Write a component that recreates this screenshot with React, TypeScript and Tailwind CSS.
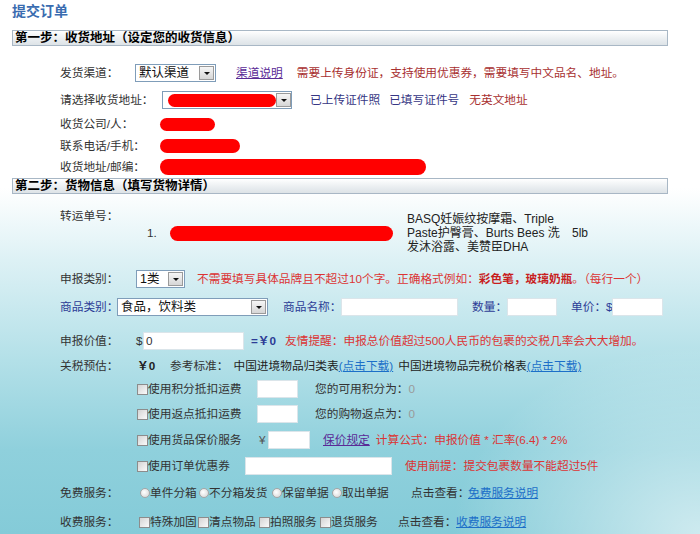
import React from 'react';

const FONT = "font-['Liberation_Sans','Noto_Sans_CJK_SC',sans-serif]";

function Arrow() {
  return (
    <span className="ml-auto mr-[1px] flex h-[14px] w-[15px] shrink-0 items-center justify-center border border-[#9a9a9a] bg-[linear-gradient(180deg,#f6f6f6,#d6d6d6)]">
      <span className="h-0 w-0 border-x-[3px] border-t-[3px] border-x-transparent border-t-[#111]" />
    </span>
  );
}

function Select({ className, children }: { className: string; children?: React.ReactNode }) {
  return (
    <div className={`flex h-[18px] shrink-0 items-center border border-[#7f9db9] bg-white text-[12.5px] text-[#111] ${className}`}>
      <span className="flex flex-1 items-center pl-[3px]">{children}</span>
      <Arrow />
    </div>
  );
}

function Input({ className, children }: { className: string; children?: React.ReactNode }) {
  return (
    <span className={`flex h-[18px] shrink-0 items-center border border-[#dbe5ea] bg-white pl-[2px] text-[#333] ${className}`}>
      {children}
    </span>
  );
}

function Check() {
  return (
    <span className="inline-block h-[11px] w-[11px] shrink-0 border border-[#8c8c8c] bg-[linear-gradient(135deg,#d4d4d4,#fafafa)]" />
  );
}

function Radio() {
  return (
    <span className="inline-block h-[10px] w-[10px] shrink-0 rounded-full border border-[#a6a6a6] bg-[radial-gradient(circle_at_40%_40%,#ffffff,#d2d2d2)]" />
  );
}

function Blob({ className }: { className: string }) {
  return <span className={`block shrink-0 rounded-full bg-[#ff0000] ${className}`} />;
}

function SectionBar({ children }: { children: React.ReactNode }) {
  return (
    <div className="ml-[12px] flex h-[16px] w-[656px] items-center border border-[#a8b7c5] bg-[linear-gradient(180deg,#ffffff,#e9edf0_60%,#dde3e7)] pl-[2px] text-[12.5px] font-bold leading-none text-black">
      {children}
    </div>
  );
}

export default function App() {
  return (
    <div
      className={`${FONT} h-[534px] w-[700px] overflow-hidden whitespace-nowrap bg-[radial-gradient(ellipse_at_100%_100%,rgba(255,255,255,0.6),rgba(255,255,255,0)_25%),linear-gradient(180deg,#ffffff_0px,#ffffff_188px,#ddf1f5_260px,#b3e0e8_360px,#8fd0dc_450px,#84cbd8_534px)] text-[11.7px] leading-[16px] text-[#333]`}
    >
      <div className="pl-[12px] pt-[3px] text-[14px] font-bold leading-[16px] text-[#3a6cb0]">提交订单</div>

      <div className="mt-[11px]">
        <SectionBar>第一步：收货地址（设定您的收货信息）</SectionBar>
      </div>

      {/* step 1 */}
      <div className="mt-[17px] flex h-[20px] items-center pl-[60px]">
        <span className="w-[75px]">发货渠道：</span>
        <Select className="w-[81px]">默认渠道</Select>
        <a className="ml-[20px] text-[#5a2a96] underline">渠道说明</a>
        <span className="ml-[14px] text-[#a83030]">需要上传身份证，支持使用优惠券，需要填写中文品名、地址。</span>
      </div>

      <div className="mt-[7px] flex h-[20px] items-center pl-[60px]">
        <span className="w-[102px]">请选择收货地址：</span>
        <Select className="w-[130px]">
          <Blob className="ml-[2px] h-[13px] w-[108px]" />
        </Select>
        <span className="ml-[18px] text-[#363684]">已上传证件照</span>
        <span className="ml-[9px] text-[#363684]">已填写证件号</span>
        <span className="ml-[10px] text-[#a83030]">无英文地址</span>
      </div>

      <div className="mt-[4px] flex h-[20px] items-center pl-[60px]">
        <span className="w-[100px]">收货公司/人：</span>
        <Blob className="h-[13px] w-[55px]" />
      </div>

      <div className="mt-[2px] flex h-[20px] items-center pl-[60px]">
        <span className="w-[100px]">联系电话/手机：</span>
        <Blob className="h-[14px] w-[80px]" />
      </div>

      <div className="mt-[1px] flex h-[20px] items-center pl-[60px]">
        <span className="w-[100px]">收货地址/邮编：</span>
        <Blob className="h-[16px] w-[266px]" />
      </div>

      <div className="mt-[1px]">
        <SectionBar>第二步：货物信息（填写货物详情）</SectionBar>
      </div>

      {/* step 2 */}
      <div className="flex h-[72px] items-start pl-[60px]">
        <span className="mt-[15px] w-[87px] leading-[14px]">转运单号：</span>
        <div className="mt-[18px] flex items-center">
          <span className="w-[23px]">1.</span>
          <Blob className="h-[15px] w-[223px]" />
          <span className="ml-[14px] w-[165px] text-[12px] leading-[14px] text-[#222]">
            BASQ妊娠纹按摩霜、Triple
            <br />
            Paste护臀膏、Burts Bees 洗
            <br />
            发沐浴露、美赞臣DHA
          </span>
          <span className="text-[12px] text-[#222]">5lb</span>
        </div>
      </div>

      <div className="mt-[3px] flex h-[20px] items-center pl-[60px]">
        <span className="w-[76px]">申报类别：</span>
        <Select className="w-[49px]">1类</Select>
        <span className="ml-[12px] text-[#dc3434]">
          不需要填写具体品牌且不超过10个字。正确格式例如：<b className="text-[#c81e1e]">彩色笔，玻璃奶瓶</b>。（每行一个）
        </span>
      </div>

      <div className="mt-[8px] flex h-[20px] items-center pl-[60px] text-[#2c3c96]">
        <span className="w-[57px]">商品类别：</span>
        <Select className="w-[151px]">食品，饮料类</Select>
        <span className="ml-[15px] w-[58px]">商品名称：</span>
        <Input className="w-[117px]" />
        <span className="ml-[14px] w-[35px]">数量：</span>
        <Input className="w-[50px]" />
        <span className="ml-[14px] w-[41px]">单价：$</span>
        <Input className="w-[51px]" />
      </div>

      <div className="mt-[14px] flex h-[20px] items-center pl-[60px]">
        <span className="w-[76px]">申报价值：</span>
        <span className="w-[7px]">$</span>
        <Input className="w-[101px]">0</Input>
        <b className="ml-[7px] text-[#2c3c96]">=￥0</b>
        <span className="ml-[9px] text-[#dc3434]">友情提醒：申报总价值超过500人民币的包裹的交税几率会大大增加。</span>
      </div>

      <div className="mt-[5px] flex h-[20px] items-center pl-[60px]">
        <span className="w-[77px]">关税预估：</span>
        <b className="w-[19px] text-[#222]">￥0</b>
        <span className="ml-[14px]">参考标准：</span>
        <span className="ml-[5px] text-[#222]">中国进境物品归类表</span>
        <a className="text-[#1c6fc8] underline">(点击下载)</a>
        <span className="ml-[5px] text-[#222]">中国进境物品完税价格表</span>
        <a className="text-[#1c6fc8] underline">(点击下载)</a>
      </div>

      <div className="mt-[3px] flex h-[20px] items-center pl-[137px]">
        <Check />
        <span className="w-[96px]">使用积分抵扣运费</span>
        <Input className="ml-[13px] w-[41px]" />
        <span className="ml-[17px]">您的可用积分为：</span>
        <span className="text-[#9a9a9a]">0</span>
      </div>

      <div className="mt-[5px] flex h-[20px] items-center pl-[137px]">
        <Check />
        <span className="w-[96px]">使用返点抵扣运费</span>
        <Input className="ml-[13px] w-[41px]" />
        <span className="ml-[17px]">您的购物返点为：</span>
        <span className="text-[#9a9a9a]">0</span>
      </div>

      <div className="mt-[6px] flex h-[20px] items-center pl-[137px]">
        <Check />
        <span className="w-[96px]">使用货品保价服务</span>
        <span className="ml-[15px] w-[9px] text-[#555]">¥</span>
        <Input className="w-[42px]" />
        <a className="ml-[13px] text-[#5a2a96] underline">保价规定</a>
        <span className="ml-[6px] text-[#dc3434]">计算公式：申报价值 * 汇率(6.4) * 2%</span>
      </div>

      <div className="mt-[6px] flex h-[20px] items-center pl-[137px]">
        <Check />
        <span className="w-[84px]">使用订单优惠券</span>
        <Input className="ml-[13px] w-[147px]" />
        <span className="ml-[13px] text-[#dc3434]">使用前提：提交包裹数量不能超过5件</span>
      </div>

      <div className="mt-[7px] flex h-[20px] items-center pl-[60px]">
        <span className="w-[80px]">免费服务：</span>
        <Radio />
        <span className="w-[49px]">单件分箱</span>
        <Radio />
        <span className="w-[63px]">不分箱发货</span>
        <Radio />
        <span className="w-[50px]">保留单据</span>
        <Radio />
        <span className="w-[48px]">取出单据</span>
        <span className="ml-[21px] w-[57px]">点击查看：</span>
        <a className="text-[#1c6fc8] underline">免费服务说明</a>
      </div>

      <div className="mt-[9px] flex h-[20px] items-center pl-[60px]">
        <span className="w-[79px]">收费服务：</span>
        <Check />
        <span className="w-[48px]">特殊加固</span>
        <Check />
        <span className="w-[50px]">清点物品</span>
        <Check />
        <span className="w-[50px]">拍照服务</span>
        <Check />
        <span className="w-[46px]">退货服务</span>
        <span className="ml-[21px] w-[58px]">点击查看：</span>
        <a className="text-[#1c6fc8] underline">收费服务说明</a>
      </div>
    </div>
  );
}
